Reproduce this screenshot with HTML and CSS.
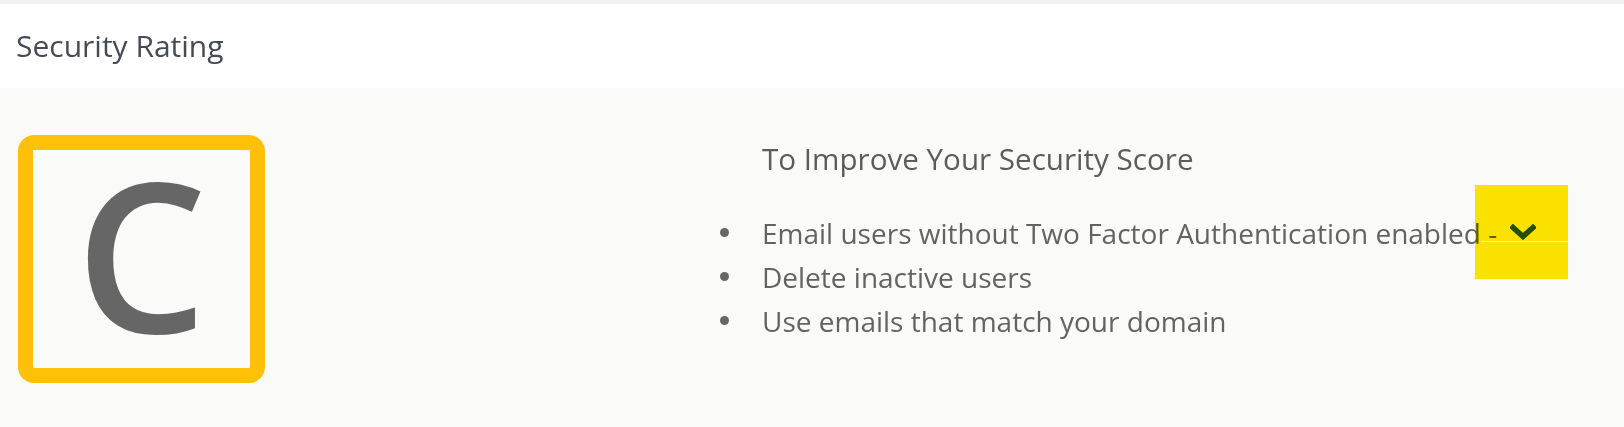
FILE: index.html
```html
<!DOCTYPE html>
<html>
<head>
<meta charset="utf-8">
<link rel="stylesheet" href="styles.css">
</head>
<body>
<div class="topbar"></div>
<header class="panel-head"><h2 class="panel-title">Security Rating</h2></header>
<section class="panel-body">
  <div class="grade"><span class="grade-letter">C</span></div>
  <div class="tips">
    <h3 class="tips-title">To Improve Your Security Score</h3>
    <ul class="tips-list">
      <li class="tip">Email users without Two Factor Authentication enabled - <span class="toggle"><svg viewBox="0 0 26 17" width="26" height="17"><path d="M3 3.5 L13 12.5 L23 3.5" fill="none" stroke="#26561a" stroke-width="5.5" stroke-linecap="square" stroke-linejoin="miter"/></svg></span></li>
      <li class="tip">Delete inactive users</li>
      <li class="tip">Use emails that match your domain</li>
    </ul>
  </div>
</section>
<div class="highlight"><div class="highlight-line"></div></div>
</body>
</html>
```

FILE: styles.css
```css
html, body { margin: 0; padding: 0; }
body {
  background: #fafaf9;
  font-family: "Open Sans", "Noto Sans", sans-serif;
  color: #636363;
  width: 1624px;
  height: 427px;
  overflow: hidden;
  position: relative;
}
.topbar { height: 4px; background: #f1f1f1; }
.panel-head {
  background: #fff;
  height: 84px;
  display: flex;
  align-items: center;
  padding-left: 16px;
}
.panel-title {
  margin: 0;
  font-size: 30px;
  font-weight: 400;
  color: #454b54;
  line-height: 1;
}
.panel-body {
  display: flex;
  padding: 47px 0 0 18px;
}
.grade {
  box-sizing: border-box;
  width: 247px;
  height: 248px;
  border: 15px solid #ffc107;
  border-radius: 16px;
  padding-bottom: 12px;
  display: flex;
  align-items: center;
  justify-content: center;
}
.grade-letter {
  font-size: 208px;
  font-weight: 600;
  color: #666;
  line-height: 1;
}
.tips { margin-left: 455px; padding-top: 6px; }
.tips-title {
  margin: 0 0 34px 42px;
  font-size: 29.6px;
  font-weight: 400;
  line-height: 1.2;
  color: #5c5c5c;
}
.tips-list { list-style: none; margin: 0; padding: 0; }
.tip {
  display: flex;
  align-items: center;
  font-size: 28px;
  line-height: 44px;
  white-space: pre;
}
.tip::before {
  content: "";
  width: 9px;
  height: 9px;
  border-radius: 50%;
  background: #666;
  margin-right: 33px;
}
.toggle { display: inline-flex; margin-left: 6px; }
.highlight {
  position: absolute;
  left: 1475px;
  top: 185px;
  width: 93px;
  height: 94px;
  background: #ffe600;
  mix-blend-mode: multiply;
}
.highlight-line {
  position: absolute;
  left: 6px; right: 0; top: 56px;
  height: 1px;
  background: #fff6a0;
}
```
